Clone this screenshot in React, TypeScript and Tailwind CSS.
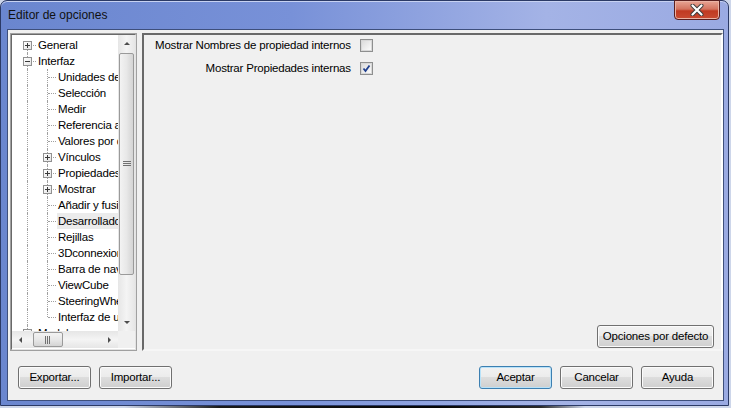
import React from "react";

type TreeNode = {
  label: string;
  level: 0 | 1;
  exp?: "+" | "-";
  first?: boolean;
  last?: boolean;
  sel?: boolean;
};

const NODES: TreeNode[] = [
  { label: "General", level: 0, exp: "+", first: true },
  { label: "Interfaz", level: 0, exp: "-" },
  { label: "Unidades de medida", level: 1 },
  { label: "Selección", level: 1 },
  { label: "Medir", level: 1 },
  { label: "Referencia a objetos", level: 1 },
  { label: "Valores por defecto", level: 1 },
  { label: "Vínculos", level: 1, exp: "+" },
  { label: "Propiedades", level: 1, exp: "+" },
  { label: "Mostrar", level: 1, exp: "+" },
  { label: "Añadir y fusionar", level: 1 },
  { label: "Desarrollador", level: 1, sel: true },
  { label: "Rejillas", level: 1 },
  { label: "3Dconnexion", level: 1 },
  { label: "Barra de navegación", level: 1 },
  { label: "ViewCube", level: 1 },
  { label: "SteeringWheels", level: 1 },
  { label: "Interfaz de usuario", level: 1, last: true },
  { label: "Modelo", level: 0, exp: "+" },
];

function Expander({ sign }: { sign: "+" | "-" }) {
  return (
    <div className="absolute left-[6px] top-[4px] flex h-[9px] w-[9px] items-center justify-center border border-[#919191] bg-gradient-to-br from-white to-[#e4e4e4]">
      <svg width="7" height="7" viewBox="0 0 7 7">
        <path d="M1 3.5h5" stroke="#3a3a3a" strokeWidth="1" />
        {sign === "+" && <path d="M3.5 1v5" stroke="#3a3a3a" strokeWidth="1" />}
      </svg>
    </div>
  );
}

function Cell({
  vert,
  horiz,
  exp,
}: {
  vert: "full" | "top" | "bottom" | "none";
  horiz?: boolean;
  exp?: "+" | "-";
}) {
  return (
    <div className="relative h-[16px] w-[20px] shrink-0">
      {vert === "full" && <div className="absolute bottom-0 left-[10px] top-0 border-l border-dotted border-[#a0a0a0]" />}
      {vert === "top" && <div className="absolute left-[10px] top-0 h-[8px] border-l border-dotted border-[#a0a0a0]" />}
      {vert === "bottom" && <div className="absolute bottom-0 left-[10px] top-[8px] border-l border-dotted border-[#a0a0a0]" />}
      {horiz && <div className="absolute left-[11px] right-[1px] top-[8px] border-t border-dotted border-[#a0a0a0]" />}
      {exp && <Expander sign={exp} />}
    </div>
  );
}

function TreeRow({ n }: { n: TreeNode }) {
  return (
    <div className="flex h-[16px] items-center">
      {n.level === 0 ? (
        <Cell vert={n.first ? "bottom" : "full"} horiz exp={n.exp} />
      ) : (
        <>
          <Cell vert="full" />
          <Cell vert={n.last ? "top" : "full"} horiz exp={n.exp} />
        </>
      )}
      <span className={`whitespace-nowrap pl-[1px] pr-[2px] leading-[16px] text-black ${n.sel ? "bg-[#ebebeb]" : ""}`}>
        {n.label}
      </span>
    </div>
  );
}

function Arrow({ dir }: { dir: "up" | "down" | "left" | "right" }) {
  const d = {
    up: "M1 5L4 2L7 5Z",
    down: "M1 2L4 5L7 2Z",
    left: "M5 1L2 4L5 7Z",
    right: "M2 1L5 4L2 7Z",
  }[dir];
  return (
    <svg width="8" height="8" viewBox="0 0 8 8">
      <path d={d} fill="#4d4d4d" />
    </svg>
  );
}

function VScroll() {
  return (
    <div className="flex w-[17px] shrink-0 flex-col bg-gradient-to-r from-[#e6e6e6] via-[#f4f4f4] to-[#e6e6e6]">
      <div className="flex h-[17px] items-center justify-center">
        <Arrow dir="up" />
      </div>
      <div className="mx-[1px] mt-[1px] flex h-[222px] items-center justify-center rounded-[2px] border border-[#9a9a9a] bg-gradient-to-r from-[#f3f3f3] via-[#e8e8e8] to-[#d4d4d4]">
        <svg width="8" height="8" viewBox="0 0 8 8">
          <path d="M0 1.5h8M0 3.5h8M0 5.5h8" stroke="#707070" strokeWidth="1" />
        </svg>
      </div>
      <div className="flex-1" />
      <div className="flex h-[17px] items-center justify-center">
        <Arrow dir="down" />
      </div>
    </div>
  );
}

function HScroll() {
  return (
    <div className="flex h-[17px] flex-1 items-center bg-gradient-to-b from-[#e6e6e6] via-[#f4f4f4] to-[#e6e6e6]">
      <div className="flex h-[17px] w-[17px] items-center justify-center">
        <Arrow dir="left" />
      </div>
      <div className="ml-[4px] flex h-[15px] w-[30px] items-center justify-center rounded-[2px] border border-[#9a9a9a] bg-gradient-to-b from-[#f3f3f3] via-[#e8e8e8] to-[#d4d4d4]">
        <svg width="8" height="8" viewBox="0 0 8 8">
          <path d="M1.5 0v8M3.5 0v8M5.5 0v8" stroke="#707070" strokeWidth="1" />
        </svg>
      </div>
      <div className="flex-1" />
      <div className="flex h-[17px] w-[17px] items-center justify-center">
        <Arrow dir="right" />
      </div>
    </div>
  );
}

function Checkbox({ checked }: { checked?: boolean }) {
  return (
    <div className="flex h-[13px] w-[13px] items-center justify-center border border-[#8e8f8f] bg-white">
      <div className="flex h-[11px] w-[11px] items-center justify-center border border-[#d8d8d8] bg-gradient-to-br from-[#dcdcdc] to-[#fbfbfb]">
        {checked && (
          <svg width="9" height="9" viewBox="0 0 9 9">
            <path d="M1.5 4.5L3.5 7L7.5 1.5" stroke="#1f3f8e" strokeWidth="1.8" fill="none" />
          </svg>
        )}
      </div>
    </div>
  );
}

function Button({ label, primary, className = "" }: { label: string; primary?: boolean; className?: string }) {
  return (
    <button
      className={`flex h-[23px] items-center justify-center rounded-[3px] border leading-none text-black ${
        primary
          ? "border-[#3c7fb1] shadow-[inset_0_0_0_1px_#b8e2f9]"
          : "border-[#707070] shadow-[inset_0_0_0_1px_#fbfbfb]"
      } bg-[linear-gradient(#f2f2f2_0%,#ebebeb_50%,#dddddd_50%,#cfcfcf_100%)] ${className}`}
    >
      {label}
    </button>
  );
}

export default function App() {
  return (
    <div className="relative h-[408px] w-[731px] overflow-hidden bg-[linear-gradient(90deg,#cdd6ea_0%,#cdd6ea_17%,#1a1a1a_30%,#050505_60%,#2a2a2a_74%,#cdd6ea_80%)] font-['Liberation_Sans',Arial,sans-serif] text-[11.5px] tracking-[-0.2px]">
      <div className="flex h-[406px] w-[729px] flex-col rounded-t-[7px] border border-[#2b3a66] bg-[linear-gradient(90deg,#6a86cf_0%,#7891d8_40%,#a4b3e6_75%,#9aaae2_100%)] pl-[6px] pr-[4px] shadow-[inset_0_1px_0_#c7d2f2]">
        {/* title bar */}
        <div className="relative flex h-[28px] shrink-0 items-center pl-[1px]">
          <span className="text-[12px] tracking-normal text-[#111]">Editor de opciones</span>
          <div className="absolute right-[4px] top-[-1px] flex h-[20px] w-[46px] items-center justify-center rounded-b-[4px] border border-[#5a1f1f] bg-[linear-gradient(#e8a595_0%,#d3735f_45%,#c03a22_55%,#c94b32_100%)] shadow-[inset_0_0_0_1px_#eab3a5]">
            <svg width="14" height="12" viewBox="0 0 14 12">
              <path d="M2.5 1.5L11.5 10.5M11.5 1.5L2.5 10.5" stroke="#3b3b3b" strokeWidth="4" strokeLinecap="round" />
              <path d="M2.5 1.5L11.5 10.5M11.5 1.5L2.5 10.5" stroke="#ffffff" strokeWidth="2.2" strokeLinecap="round" />
            </svg>
          </div>
        </div>

        {/* client area */}
        <div className="flex h-[372px] flex-col border border-[#3e4f7c] bg-[#f0f0f0]">
          <div className="flex pl-[2px] pt-[3px]">
            {/* tree panel */}
            <div className="flex h-[318px] w-[127px] shrink-0 flex-col border border-[#a0a0a0] bg-white">
              <div className="flex flex-1 flex-col border border-[#e3e3e3] border-l-[#696969] border-t-[#696969]">
                <div className="flex h-[296px]">
                  <div className="flex-1 overflow-hidden pl-[5px] pt-[2px]">
                    {NODES.map((n) => (
                      <TreeRow key={n.label} n={n} />
                    ))}
                  </div>
                  <VScroll />
                </div>
                <div className="flex">
                  <HScroll />
                  <div className="h-[17px] w-[17px] bg-[#f0f0f0]" />
                </div>
              </div>
            </div>

            {/* property panel */}
            <div className="ml-[5px] flex h-[318px] flex-1 flex-col justify-between border-2 border-[#a0a0a0] border-b-[#f6f6f6] border-r-[#ffffff] border-l-[#696969] border-t-[#696969]">
              <div className="grid w-fit grid-cols-[auto_auto] items-center gap-x-[9px] gap-y-[10px] pl-[11px] pt-[4px] leading-[13px] text-black">
                <span className="text-right">Mostrar Nombres de propiedad internos</span>
                <Checkbox />
                <span className="text-right">Mostrar Propiedades internas</span>
                <Checkbox checked />
              </div>
              <div className="mb-[1px] mr-[7px] self-end">
                <Button label="Opciones por defecto" className="w-[117px]" />
              </div>
            </div>
          </div>

          {/* bottom buttons */}
          <div className="mt-[15px] flex items-center pl-[10px] pr-[9px]">
            <Button label="Exportar..." className="w-[73px]" />
            <Button label="Importar..." className="ml-[8px] w-[73px]" />
            <div className="flex-1" />
            <Button label="Aceptar" primary className="w-[73px]" />
            <Button label="Cancelar" className="ml-[8px] w-[73px]" />
            <Button label="Ayuda" className="ml-[8px] w-[73px]" />
          </div>
        </div>
      </div>
    </div>
  );
}
